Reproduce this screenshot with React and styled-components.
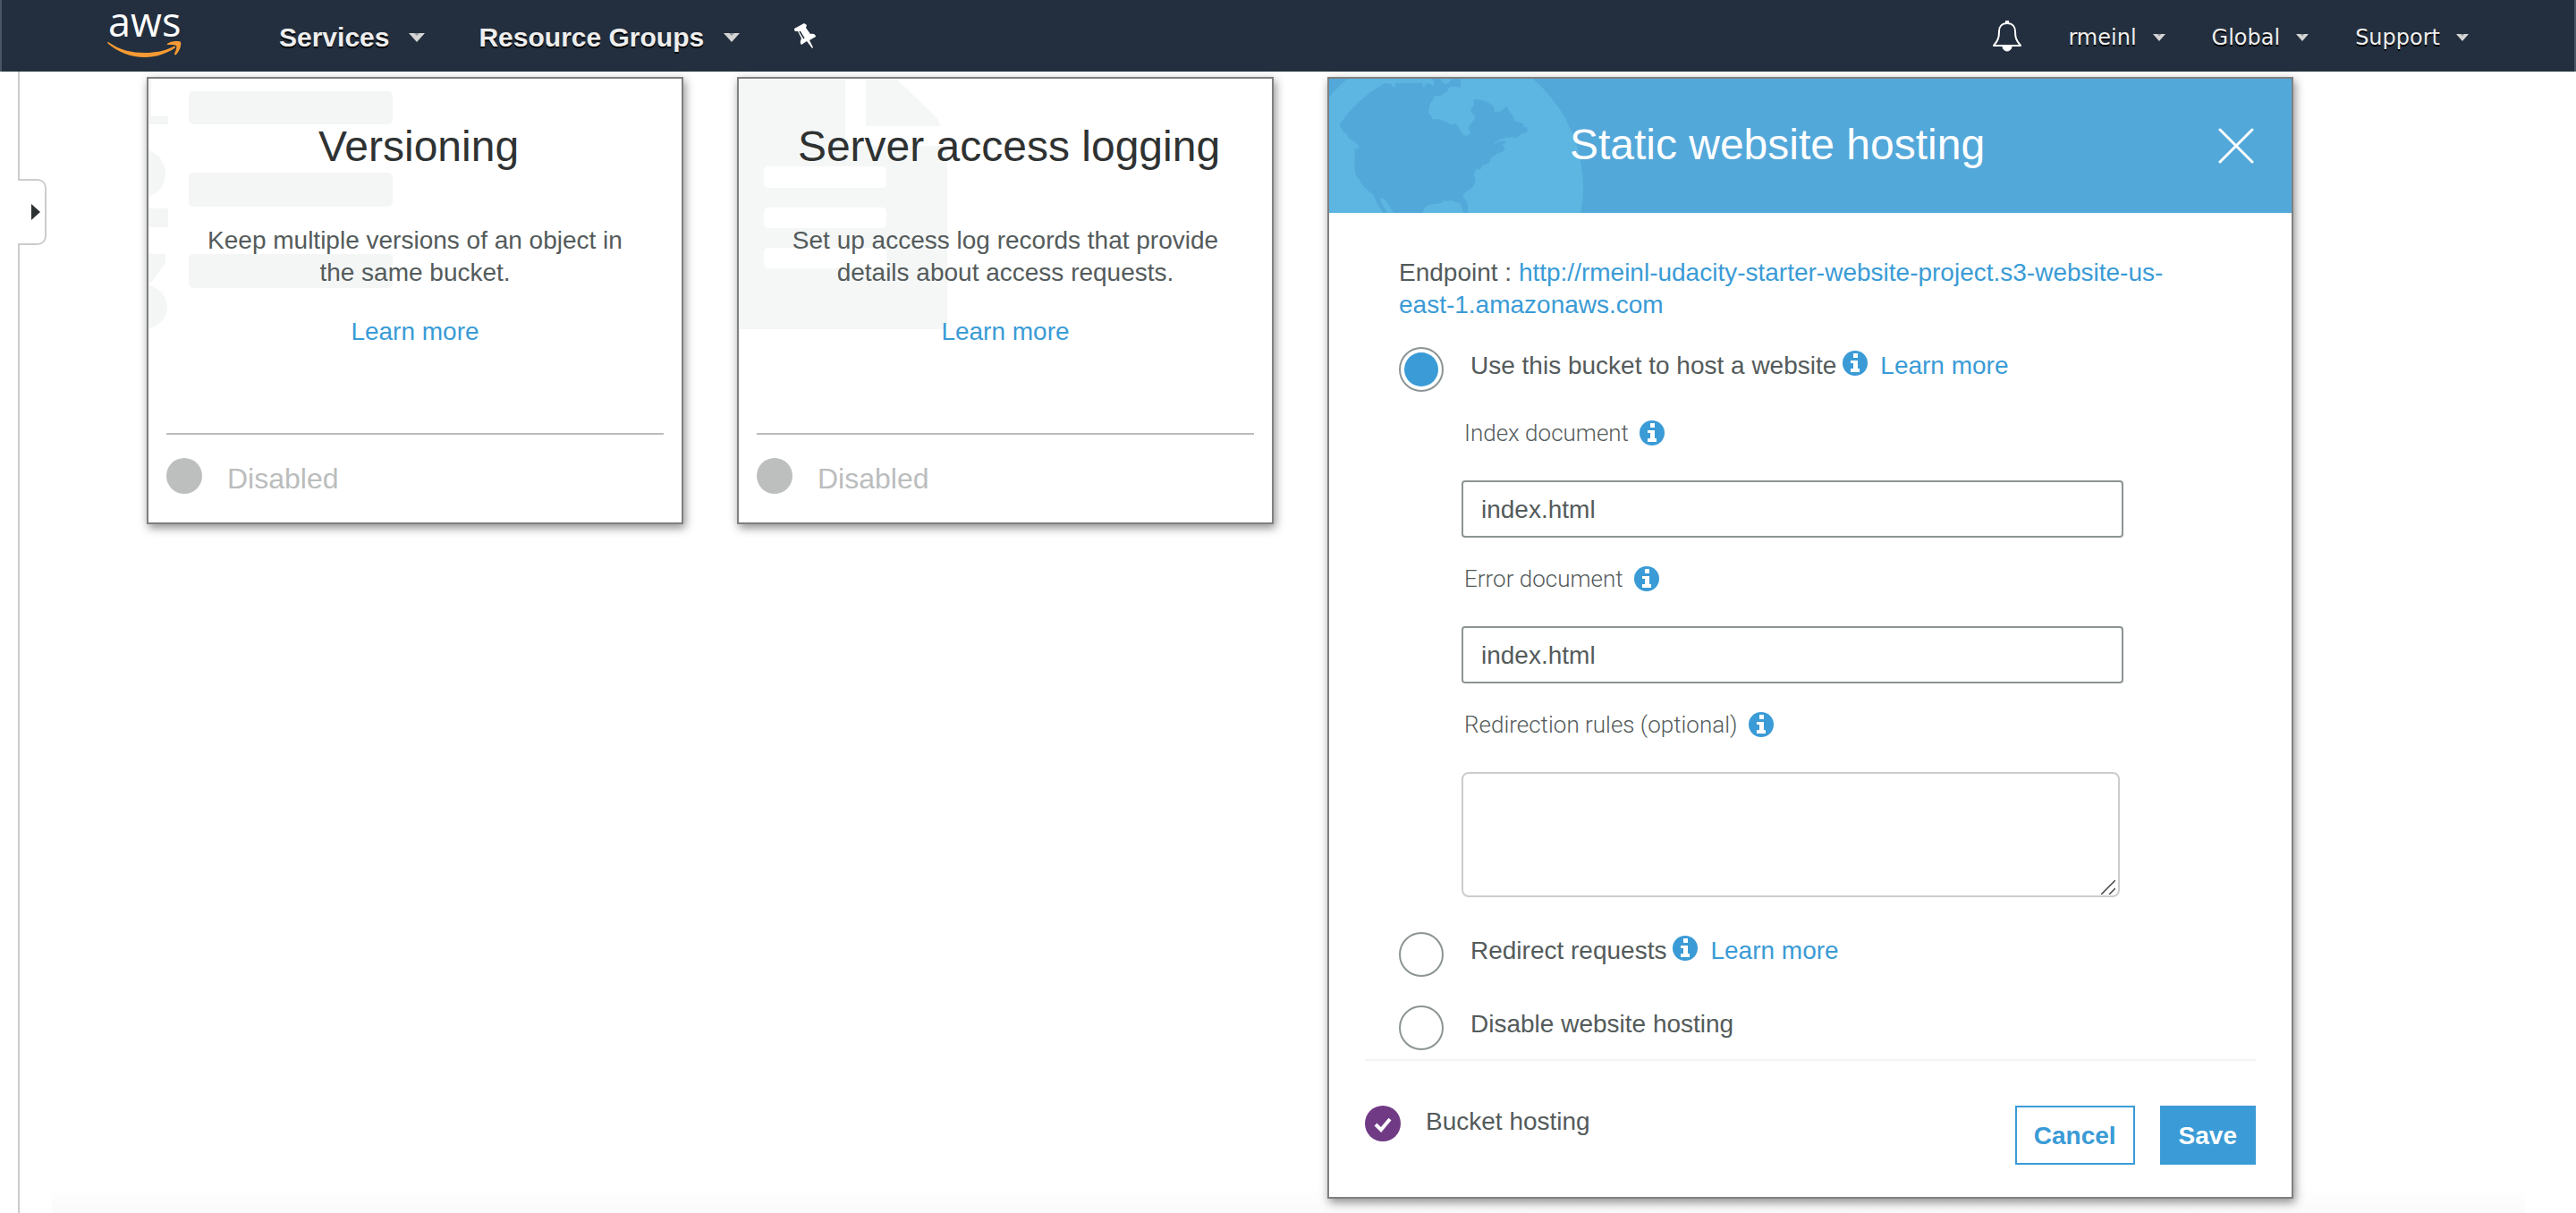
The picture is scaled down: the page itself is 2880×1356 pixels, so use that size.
import React, { useState } from "react";
import styled, { createGlobalStyle } from "styled-components";

const blue = "#3a9bd6";
const sans = '"Liberation Sans", Arial, sans-serif';

const GlobalStyle = createGlobalStyle`
  *, *::before, *::after { box-sizing: border-box; }
  body {
    margin: 0;
    background: #fff;
    color: #545b5b;
    font: 28px/36px ${sans};
  }
  h2, p { margin: 0; font-weight: 400; }
  button, input, textarea { font: inherit; color: inherit; }
`;

const Page = styled.div`
  display: flex;
  flex-direction: column;
  min-height: 100vh;
`;

const TopBar = styled.header`
  display: flex;
  align-items: center;
  justify-content: space-between;
  height: 80px;
  padding: 0 118px;
  background: #232f3e;
  border: solid #4a5565;
  border-width: 0 2px;
`;

const NavGroup = styled.nav`
  display: flex;
  align-items: center;
  gap: ${(p) => p.$gap}px;
`;

const LogoLink = styled.a`
  display: block;
  width: 84px;
  height: 80px;
  margin-right: 48px;
`;

const NavButton = styled.button`
  display: flex;
  align-items: center;
  gap: ${(p) => (p.$minor ? 18 : 22)}px;
  padding: ${(p) => (p.$minor ? 3 : 4)}px 0 0;
  border: 0;
  background: none;
  color: #eee;
  font-family: ${(p) => (p.$minor ? '"DejaVu Sans", Verdana, sans-serif' : sans)};
  font-size: ${(p) => (p.$minor ? 24 : 30)}px;
  font-weight: ${(p) => (p.$minor ? 400 : 700)};
  line-height: 36px;
  text-shadow: 0 2px 0 #000;
  cursor: pointer;
`;

const IconButton = styled.button`
  display: flex;
  padding: 2px 0 0;
  border: 0;
  background: none;
  color: #fff;
  cursor: pointer;
`;

const Main = styled.main`
  flex: 1;
  display: flex;
  background: linear-gradient(#fff, #fafafa) bottom / 96% 30px no-repeat;
`;

const Rail = styled.aside`
  display: flex;
  flex-direction: column;
  width: 52px;
  padding-left: 20px;
`;

const RailLine = styled.div`
  border-left: 2px solid #ccc;
  ${(p) => (p.$short ? "height: 120px;" : "flex: 1;")}
`;

const RailToggle = styled.button`
  display: flex;
  align-items: center;
  justify-content: flex-end;
  height: 74px;
  padding: 0 5px 0 0;
  border: 2px solid #ccc;
  border-left: 0;
  border-radius: 0 10px 10px 0;
  background: #fff;
  cursor: pointer;
`;

const Cards = styled.section`
  flex: 1;
  display: grid;
  grid-template-columns: 600fr 600fr 1080fr;
  align-items: start;
  gap: 60px;
  padding: 6px 316px 16px 112px;
`;

const Card = styled.article`
  border: 2px solid #808080;
  background: #fff;
  box-shadow: 2px 4px 10px rgba(0, 0, 0, 0.45);
`;

const SummaryCard = styled(Card)`
  position: relative;
  padding: 46px 20px 32px;
`;

const Artwork = styled.svg`
  position: absolute;
  top: 0;
  left: 0;
`;

const Title = styled.h2`
  position: relative;
  padding-left: 8px;
  color: ${(p) => (p.$light ? "#fff" : "#2f3232")};
  font-size: 48px;
  line-height: 60px;
  text-align: center;
  ${(p) => p.$light && "flex: 1;"}
`;

const Summary = styled.p`
  position: relative;
  margin: 57px 30px 30px;
  text-align: center;
`;

const Link = styled.a`
  position: relative;
  color: ${blue};
  text-decoration: none;
`;

const LinkRow = styled.p`
  text-align: center;
`;

const StatusRow = styled.footer`
  display: flex;
  align-items: flex-end;
  gap: 28px;
  margin-top: 95px;
  padding-top: 26px;
  border-top: 2px solid #bbbdbd;
  color: #bbbdbd;
  font-size: 32px;
  line-height: 34px;
`;

const StatusDot = styled.span`
  width: 40px;
  height: 40px;
  border-radius: 50%;
  background: #bdbfbf;
`;

const HostingHeader = styled.header`
  position: relative;
  display: flex;
  align-items: center;
  height: 150px;
  padding: 0 42px 2px 0;
  background: #53a8da;
`;

const HostingBody = styled.form`
  padding: 49px 78px 10px;
`;

const Endpoint = styled.p`
  margin-bottom: 29px;
  padding-right: 30px;
`;

const Option = styled.div`
  display: flex;
  align-items: flex-start;
  margin-top: ${(p) => p.$top || 0}px;
`;

const Radio = styled.input`
  appearance: none;
  flex: none;
  width: 50px;
  height: 50px;
  margin: 0 30px 0 0;
  padding: 4px;
  border: 2px solid #8c9494;
  border-radius: 50%;
  background: #fff;
  &:checked {
    background: ${blue} content-box;
  }
`;

const OptionText = styled.div`
  display: flex;
  align-items: center;
  padding-top: 3px;
`;

const InfoMark = styled.svg`
  flex: none;
  margin: ${(p) => (p.$inOption ? "0 14px 6px 7px" : "0 0 0 12px")};
`;

const Fields = styled.div`
  padding: 0 110px 0 70px;
`;

const Field = styled.div`
  margin-top: 28px;
`;

const FieldLabel = styled.div`
  display: flex;
  align-items: center;
  margin-bottom: 35px;
  padding-left: 3px;
  font-family: Roboto, ${sans};
  font-size: 26px;
  font-weight: 300;
`;

const TextInput = styled.input`
  display: block;
  width: 100%;
  height: 64px;
  padding: 2px 20px 0;
  border: 2px solid #8c9494;
  border-radius: 4px;
  background: #fff;
`;

const RulesBox = styled.div`
  position: relative;
  margin-right: 4px;
`;

const Rules = styled.textarea`
  display: block;
  width: 100%;
  height: 140px;
  padding: 12px 20px;
  border: 2px solid #ccc;
  border-radius: 8px;
  resize: none;
`;

const Grip = styled.svg`
  position: absolute;
  right: 5px;
  bottom: 3px;
  pointer-events: none;
`;

const HostingFooter = styled.footer`
  display: flex;
  align-items: flex-start;
  gap: 28px;
  margin: 0 40px;
  padding: 50px 0 36px;
  border-top: 2px solid #f3f4f4;
`;

const HostingState = styled.div`
  flex: 1;
  display: flex;
  align-items: flex-start;
  gap: 28px;
`;

const ActionButton = styled.button`
  height: 66px;
  padding: 2px 19px 0;
  border: 2px solid ${blue};
  background: ${(p) => (p.$primary ? blue : "#fff")};
  color: ${(p) => (p.$primary ? "#fff" : blue)};
  font-weight: 700;
  cursor: pointer;
`;

const Caret = ({ small }) => (
  <svg width={small ? 14 : 18} height={small ? 8 : 10} viewBox="0 0 18 10" aria-hidden="true">
    <path d="M0 0h18L9 10z" fill="#d5d5d5" />
    <path d="M6 0h6L9 3z" fill="#8d9299" />
  </svg>
);

const AwsLogo = () => (
  <svg width="84" height="80" viewBox="0 0 84 80" role="img" aria-label="aws">
    <text x="1" y="41" fill="#fff" fontFamily='"Open Sans", "Noto Sans", sans-serif' fontWeight="500" fontSize="45">
      aws
    </text>
    <path
      d="M1 47C14 56 27 59 42 59c12 0 22-2 32-7 2-1 3 1 1 2C66 60 54 64 42 64 26 64 12 58 1 49c-1-1-1-3 0-2z"
      fill="#f79a33"
    />
    <path
      d="M67 49c3-3 13-4 15-2 1 3-1 10-5 14-1 1-2 0-2-1 2-4 3-8 2-9s-6-1-9-1c-1 0-2-.500-1-1z"
      fill="#f79a33"
    />
  </svg>
);

const PinIcon = () => (
  <svg width="26" height="30" viewBox="0 0 26 30" fill="#fff" aria-hidden="true">
    <path d="M1 6 12 0l3 2-1 3 5 7c4-1 6 1 6 3l-7 4 4 8-1 1-6-8-6 4c-2-2-1-5 0-7L5 9 2 9C1 8 1 7 1 6z" />
    <path d="M7 9l5 8" stroke="#232f3e" strokeWidth="1.500" fill="none" />
  </svg>
);

const BellIcon = () => (
  <svg width="32" height="36" viewBox="0 0 32 36" fill="none" stroke="#fff" strokeWidth="2" aria-hidden="true">
    <path d="M16 3c-6 0-9 4-9 9 0 7-1 10-6 16h30c-5-6-6-9-6-16 0-5-3-9-9-9z" strokeLinejoin="round" />
    <path d="M16 0v3" strokeWidth="4" />
    <path d="M11 29a5 5 0 0 0 10 0z" fill="#fff" stroke="none" />
    <path d="M11 29a5 5 0 0 0 10 0" strokeWidth="1" />
  </svg>
);

const CloseIcon = () => (
  <svg width="40" height="40" viewBox="0 0 40 40" stroke="#fff" strokeWidth="3" strokeLinecap="round" aria-hidden="true">
    <path d="M2 2l36 36M38 2 2 38" />
  </svg>
);

const Info = ({ inOption }) => (
  <InfoMark $inOption={inOption} width="28" height="28" viewBox="0 0 28 28" aria-hidden="true">
    <circle cx="14" cy="14" r="14" fill={blue} />
    <path d="M12 3h5v5h-5zM9 11h8v9h2v4H9v-4h3v-6H9z" fill="#fff" />
  </InfoMark>
);

const CheckMark = () => (
  <svg width="40" height="40" viewBox="0 0 40 40" aria-hidden="true">
    <circle cx="20" cy="20" r="20" fill="#713a85" />
    <path d="M12 21l6 6 10-12" fill="none" stroke="#fff" strokeWidth="4" />
  </svg>
);

const VersioningArt = () => (
  <Artwork width="280" height="290" viewBox="0 0 280 290" fill="#f4f6f6" aria-hidden="true">
    <rect x="45" y="14" width="228" height="37" rx="5" />
    <rect x="45" y="105" width="228" height="38" rx="5" />
    <rect x="45" y="196" width="228" height="38" rx="5" />
    <rect x="0" y="0" width="3" height="51" />
    <rect x="0" y="42" width="22" height="9" />
    <ellipse cx="-5" cy="106" rx="24" ry="26" />
    <rect x="0" y="145" width="22" height="21" />
    <rect x="0" y="196" width="19" height="10" />
    <path d="M0 206h19L3 228H0z" />
    <ellipse cx="-6" cy="255" rx="27" ry="25" />
  </Artwork>
);

const LoggingArt = () => (
  <Artwork width="240" height="290" viewBox="0 0 240 290" aria-hidden="true">
    <path d="M0 0h119v66q0 9 9 9h105v197q0 8-8 8H0z" fill="#f5f7f7" />
    <path d="M142 0h34l46 44 4 9h-84z" fill="#f5f7f7" />
    <g fill="#fff">
      <rect x="28" y="98" width="137" height="24" rx="5" />
      <rect x="28" y="144" width="137" height="23" rx="5" />
      <rect x="28" y="189" width="137" height="23" rx="5" />
    </g>
  </Artwork>
);

const GlobeArt = () => (
  <Artwork width="300" height="150" viewBox="18 24 900 450" aria-hidden="true">
    <circle cx="390" cy="390" r="480" fill="#5cb6e1" />
    <path
      fill="#53a8da"
      d="M52 179C96 116 148 70 204 39l20 2 13 14 3-17h90l5 18 7-14c10-6 18 0 25 6l4-11-9-13h30l4 10 12 9
         10-5 12-14h29v30l-14-3-22-1-12 18-22 14-16-1-8 14-8 12-4 12-2 20 10 10 2 10c22-2 46 4 62 20l18-4
         c10 8 14 26 24 36 6 6 14 6 20 0l6-6c-12-14-8-24 2-32l12-14c2-8-2-14-8-18-10-12-6-20 4-26v-22
         c26 0 48 8 66 22l4 22 20-4 20-16 10 18 12 14 6 18 16 4 14 4-2 10 12 2c6 12 2 18-12 20l-12 6-10 10
         c-28-6-64 0-80 26 14-10 28-20 42-16 8 4-6 8-10 14l10 12c-4 12-16 12-28 16l-22 16-2 14-26 10-6 14
         -16-2-6 22 6 10c-2 16-6 28-20 36l-20 14c-6 8 4 16 8 24l6 16v30c-10 6-16-8-20-24-6-20-12-16-24-18
         -10-8-22-2-30-2l-10-4-2 10-36 4c-18 4-28 14-28 32v16h-92c-8-26-22-42-38-66l-14-4 2 14 14 22 12 34
         h-8l-14-24-12-18-18-40c-18-12-34-24-44-46-14-12-20-34-18-54l2-38-2-18 8 6 8-6c-4-16-22-22-38-32
         l-2-14-12-4z"
    />
  </Artwork>
);

function SummaryTile({ title, text, art }) {
  return (
    <SummaryCard>
      {art}
      <Title>{title}</Title>
      <Summary>{text}</Summary>
      <LinkRow>
        <Link href="#">Learn more</Link>
      </LinkRow>
      <StatusRow>
        <StatusDot />
        Disabled
      </StatusRow>
    </SummaryCard>
  );
}

function HostingOption({ id, label, top, mode, onPick, more }) {
  return (
    <Option $top={top}>
      <Radio type="radio" name="hosting" id={id} checked={mode === id} onChange={() => onPick(id)} />
      <OptionText>
        <label htmlFor={id}>{label}</label>
        {more && (
          <>
            <Info inOption />
            <Link href="#">Learn more</Link>
          </>
        )}
      </OptionText>
    </Option>
  );
}

function DocumentField({ id, label, children }) {
  return (
    <Field>
      <FieldLabel>
        <label htmlFor={id}>{label}</label>
        <Info />
      </FieldLabel>
      {children}
    </Field>
  );
}

export default function App() {
  const [mode, setMode] = useState("host");
  return (
    <Page>
      <GlobalStyle />
      <TopBar>
        <NavGroup $gap={60}>
          <LogoLink href="#">
            <AwsLogo />
          </LogoLink>
          <NavButton>
            Services
            <Caret />
          </NavButton>
          <NavButton>
            Resource Groups
            <Caret />
          </NavButton>
          <IconButton aria-label="Pin">
            <PinIcon />
          </IconButton>
        </NavGroup>
        <NavGroup $gap={52}>
          <IconButton aria-label="Notifications">
            <BellIcon />
          </IconButton>
          {["rmeinl", "Global", "Support"].map((name) => (
            <NavButton key={name} $minor>
              {name}
              <Caret small />
            </NavButton>
          ))}
        </NavGroup>
      </TopBar>
      <Main>
        <Rail>
          <RailLine $short />
          <RailToggle aria-label="Expand panel">
            <svg width="10" height="18" viewBox="0 0 10 18" aria-hidden="true">
              <path d="M0 0l10 9-10 9z" fill="#2f3232" />
            </svg>
          </RailToggle>
          <RailLine />
        </Rail>
        <Cards>
          <SummaryTile
            title="Versioning"
            text="Keep multiple versions of an object in the same bucket."
            art={<VersioningArt />}
          />
          <SummaryTile
            title="Server access logging"
            text="Set up access log records that provide details about access requests."
            art={<LoggingArt />}
          />
          <Card>
            <HostingHeader>
              <GlobeArt />
              <Title $light>Static website hosting</Title>
              <IconButton aria-label="Close">
                <CloseIcon />
              </IconButton>
            </HostingHeader>
            <HostingBody id="hosting-form" onSubmit={(e) => e.preventDefault()}>
              <Endpoint>
                Endpoint : <Link href="#">http://rmeinl-udacity-starter-website-project.s3-website-us-east-1.amazonaws.com</Link>
              </Endpoint>
              <HostingOption id="host" label="Use this bucket to host a website" mode={mode} onPick={setMode} more />
              <Fields>
                <DocumentField id="index-document" label="Index document">
                  <TextInput id="index-document" defaultValue="index.html" />
                </DocumentField>
                <DocumentField id="error-document" label="Error document">
                  <TextInput id="error-document" defaultValue="index.html" />
                </DocumentField>
                <DocumentField id="rules" label="Redirection rules (optional)">
                  <RulesBox>
                    <Rules id="rules" />
                    <Grip width="16" height="16" viewBox="0 0 16 16" stroke="#444" strokeWidth="1.500" aria-hidden="true">
                      <path d="M0 16 16 0M9 16l7-7" />
                    </Grip>
                  </RulesBox>
                </DocumentField>
              </Fields>
              <HostingOption id="redirect" label="Redirect requests" top={39} mode={mode} onPick={setMode} more />
              <HostingOption id="disable" label="Disable website hosting" top={32} mode={mode} onPick={setMode} />
            </HostingBody>
            <HostingFooter>
              <HostingState>
                <CheckMark />
                Bucket hosting
              </HostingState>
              <ActionButton type="button">Cancel</ActionButton>
              <ActionButton type="submit" form="hosting-form" $primary>
                Save
              </ActionButton>
            </HostingFooter>
          </Card>
        </Cards>
      </Main>
    </Page>
  );
}
